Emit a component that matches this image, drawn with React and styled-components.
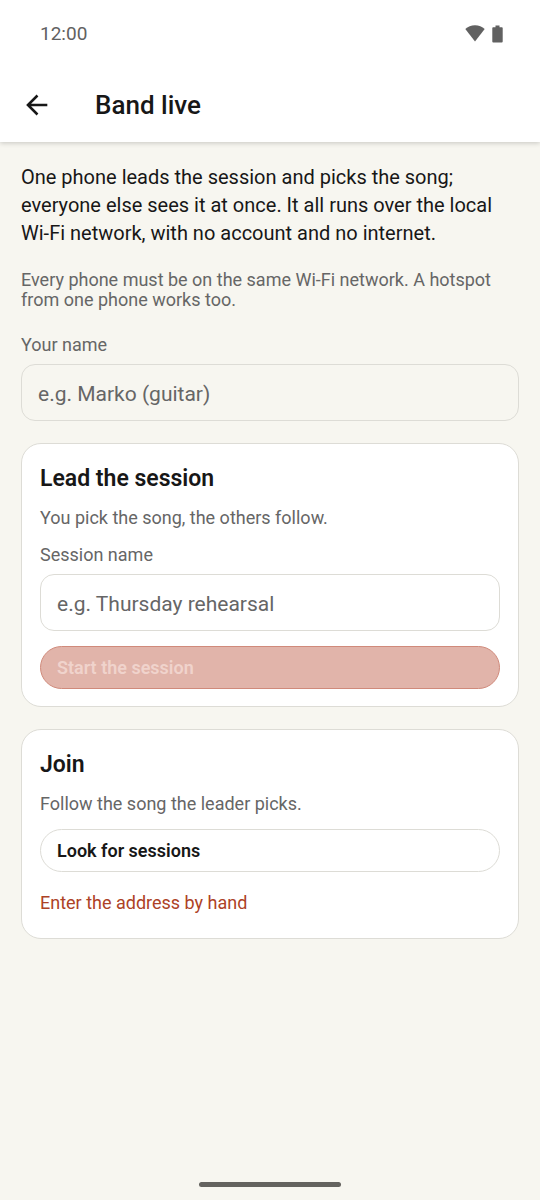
import { useState } from 'react';
import styled, { createGlobalStyle } from 'styled-components';

const GlobalStyle = createGlobalStyle`
  :root {
    --ink: #171717;
    --gray: #666666;
    --line: #dddcd6;
    --paper: #f7f6f0;
    --accent: #ad4226;
  }

  * {
    box-sizing: border-box;
  }

  body {
    margin: 0;
    background: var(--paper);
    color: var(--ink);
    font-family: Roboto, 'Noto Sans', sans-serif;
  }
`;

const Screen = styled.div`
  min-height: 100vh;
  display: flex;
  flex-direction: column;
`;

const TopArea = styled.header`
  background: #ffffff;
  box-shadow: 0 1px 5px rgba(0, 0, 0, 0.2);
`;

const StatusBar = styled.div`
  height: 67px;
  padding: 0 37px 0 40px;
  display: flex;
  align-items: center;
  justify-content: space-between;
  font-size: 19px;
  line-height: 22px;
  color: #616161;
`;

const StatusIcons = styled.div`
  display: flex;
  align-items: center;
  gap: 7px;
`;

const TitleBar = styled.div`
  height: 75px;
  padding: 0 20px;
  display: flex;
  align-items: center;
  gap: 41px;
`;

const BackButton = styled.button`
  width: 34px;
  height: 34px;
  padding: 0;
  border: 0;
  background: none;
  color: var(--ink);
  display: grid;
  place-items: center;
`;

const Title = styled.h1`
  margin: 0;
  font-size: 26px;
  line-height: 32px;
  font-weight: 500;
`;

const Main = styled.main`
  flex: 1;
  padding: 21px;
`;

const Intro = styled.p`
  margin: 0;
  font-size: 20px;
  line-height: 28px;
`;

const Hint = styled.p`
  margin: 0;
  font-size: 18px;
  line-height: 20px;
  color: var(--gray);
`;

const Field = styled.div`
  display: flex;
  flex-direction: column;
  gap: 7px;
`;

const Label = styled.label`
  font-size: 18px;
  line-height: 24px;
  color: var(--gray);
`;

const TextInput = styled.input`
  width: 100%;
  height: 57px;
  padding: 2px 16px 0;
  border: 1px solid var(--line);
  border-radius: 14px;
  background: transparent;
  color: var(--ink);
  font-family: inherit;
  font-size: 21px;

  &::placeholder {
    color: var(--gray);
    opacity: 1;
  }
`;

const NameBlock = styled.div`
  margin: 23px 0 22px;
  display: flex;
  flex-direction: column;
  gap: 23px;
`;

const Cards = styled.div`
  display: flex;
  flex-direction: column;
  gap: 22px;
`;

const Card = styled.section`
  padding: 18px 18px 17px;
  display: flex;
  flex-direction: column;
  border: 1px solid var(--line);
  border-radius: 20px;
  background: #ffffff;
`;

const CardTitle = styled.h2`
  margin: 0 0 12px;
  font-size: 23px;
  line-height: 34px;
  font-weight: 600;
`;

const CardBody = styled.div`
  display: flex;
  flex-direction: column;
  gap: 15px;
`;

const PillButton = styled.button`
  width: 100%;
  height: 43px;
  padding: 0 16px;
  border: 1px solid ${({ $primary }) => ($primary ? '#d08a7b' : 'var(--line)')};
  border-radius: 22px;
  background: ${({ $primary }) => ($primary ? '#e1b4aa' : '#ffffff')};
  color: ${({ $primary }) => ($primary ? '#f0d3cc' : 'var(--ink)')};
  font-family: inherit;
  font-size: 18px;
  font-weight: 600;
  text-align: left;
`;

const TextLink = styled.a`
  align-self: flex-start;
  padding: 6px 0 8px;
  font-size: 18px;
  line-height: 20px;
  color: var(--accent);
  text-decoration: none;
`;

const GestureBar = styled.div`
  width: 142px;
  height: 5px;
  margin: 0 auto 13px;
  border-radius: 3px;
  background: #64635f;
`;

function WifiIcon() {
  return (
    <svg width="20" height="17" viewBox="0 0 20 17" aria-hidden="true">
      <path d="M10 16.500L0.300 4C2.800 1.500 6.200 0.200 10 0.200s7.200 1.300 9.700 3.800z" fill="#616161" />
    </svg>
  );
}

function BatteryIcon() {
  return (
    <svg width="11" height="18" viewBox="0 0 11 18" aria-hidden="true">
      <path
        d="M3.500 0.500h4v1.700h2.300q.9 0 .9.900v13.500q0 .9-.9.900H1.200q-.9 0-.9-.9V3.100q0-.9.900-.9h2.300z"
        fill="#616161"
      />
    </svg>
  );
}

function ArrowIcon() {
  return (
    <svg width="22" height="22" viewBox="4 4 16 16" aria-hidden="true">
      <path
        d="M19.500 11.050H7.700l5.300-5.300L11.700 4.400 4.100 12l7.600 7.600 1.300-1.350-5.300-5.300h11.800z"
        fill="currentColor"
      />
    </svg>
  );
}

function App() {
  const [name, setName] = useState('');
  const [session, setSession] = useState('');

  return (
    <Screen>
      <GlobalStyle />
      <TopArea>
        <StatusBar>
          <span>12:00</span>
          <StatusIcons>
            <WifiIcon />
            <BatteryIcon />
          </StatusIcons>
        </StatusBar>
        <TitleBar>
          <BackButton type="button" aria-label="Back">
            <ArrowIcon />
          </BackButton>
          <Title>Band live</Title>
        </TitleBar>
      </TopArea>
      <Main>
        <Intro>
          One phone leads the session and picks the song; everyone else sees it at once. It all runs
          over the local Wi-Fi network, with no account and no internet.
        </Intro>
        <NameBlock>
          <Hint>
            Every phone must be on the same Wi-Fi network. A hotspot from one phone works too.
          </Hint>
          <Field>
            <Label htmlFor="name">Your name</Label>
            <TextInput
              id="name"
              placeholder="e.g. Marko (guitar)"
              value={name}
              onChange={(e) => setName(e.target.value)}
            />
          </Field>
        </NameBlock>
        <Cards>
          <Card>
            <CardTitle>Lead the session</CardTitle>
            <CardBody>
              <Hint>You pick the song, the others follow.</Hint>
              <Field>
                <Label htmlFor="session">Session name</Label>
                <TextInput
                  id="session"
                  placeholder="e.g. Thursday rehearsal"
                  value={session}
                  onChange={(e) => setSession(e.target.value)}
                />
              </Field>
              <PillButton type="button" $primary disabled={!name || !session}>
                Start the session
              </PillButton>
            </CardBody>
          </Card>
          <Card>
            <CardTitle>Join</CardTitle>
            <CardBody>
              <Hint>Follow the song the leader picks.</Hint>
              <PillButton type="button">Look for sessions</PillButton>
              <TextLink href="#address">Enter the address by hand</TextLink>
            </CardBody>
          </Card>
        </Cards>
      </Main>
      <GestureBar />
    </Screen>
  );
}

export default App;
